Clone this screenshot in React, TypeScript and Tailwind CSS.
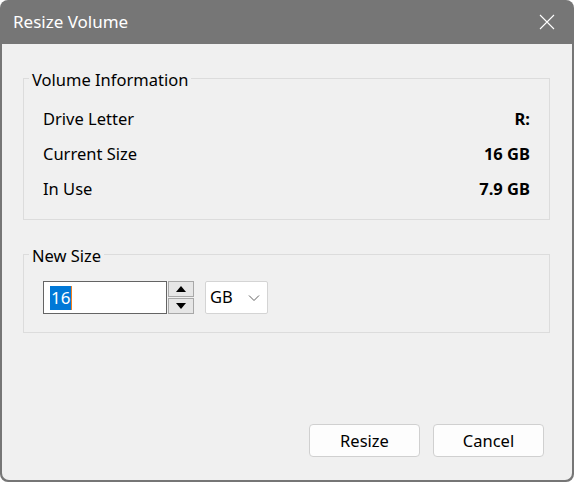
import React from "react";

export default function App() {
  const font = { fontFamily: '"Noto Sans", "Open Sans", sans-serif' };
  return (
    <div className="w-[574px] h-[482px] bg-white" style={font}>
      <div className="w-[574px] h-[482px] rounded-[8px] bg-[#767676] flex flex-col overflow-hidden">
        <div className="h-[44px] flex items-center justify-between pl-[13px] pr-[18px] text-white">
          <span className="text-[17px] leading-[22px]">Resize Volume</span>
          <svg width="16" height="16" viewBox="0 0 16 16" className="mr-[1px]">
            <path d="M1 1 L15 15 M15 1 L1 15" stroke="white" strokeWidth="1.1" fill="none" />
          </svg>
        </div>
        <div className="flex-1 mx-[2px] mb-[2px] bg-[#f0f0f0] rounded-bl-[7px] rounded-br-[7px] flex flex-col px-[21px] pt-[23px] text-[16.5px] text-black">
          <fieldset className="border border-[#dcdcdc] mr-[1px] pt-[13px] pb-[12px]">
            <legend className="ml-[5px] px-[3px] pt-[4px] leading-[18px]">Volume Information</legend>
            <div className="flex flex-col px-[19px]">
              <div className="h-[35px] flex items-center justify-between">
                <span>Drive Letter</span>
                <span className="font-bold">R:</span>
              </div>
              <div className="h-[35px] flex items-center justify-between">
                <span>Current Size</span>
                <span className="font-bold">16 GB</span>
              </div>
              <div className="h-[35px] flex items-center justify-between">
                <span>In Use</span>
                <span className="font-bold">7.9 GB</span>
              </div>
            </div>
          </fieldset>
          <fieldset className="mt-[23px] border border-[#dcdcdc] mr-[1px] pt-[16px] pb-[18px]">
            <legend className="ml-[5px] px-[3px] pt-[4px] leading-[18px]">New Size</legend>
            <div className="flex items-center px-[19px]">
              <div className="w-[124px] h-[33px] border border-[#646464] bg-white flex items-center pl-[6px]">
                <span className="bg-[#0078d7] text-white leading-[24px] px-[1px] text-[17px]">16</span>
                <span className="w-[1px] h-[24px] bg-[#f08020]" />
              </div>
              <div className="w-[27px] h-[33px] flex flex-col gap-[1px] pl-[1px]">
                <div className="flex-1 border border-[#a8a8a8] bg-[#e6e6e6] flex items-center justify-center">
                  <svg width="10" height="6" viewBox="0 0 10 6"><path d="M0 6 L5 0 L10 6 Z" fill="black" /></svg>
                </div>
                <div className="flex-1 border border-[#a8a8a8] bg-[#e6e6e6] flex items-center justify-center">
                  <svg width="10" height="6" viewBox="0 0 10 6"><path d="M0 0 L5 6 L10 0 Z" fill="black" /></svg>
                </div>
              </div>
              <div className="ml-[11px] w-[63px] h-[33px] bg-white border border-[#d4d4d4] rounded-[2px] flex items-center justify-between pl-[4px] pr-[7px]">
                <span>GB</span>
                <svg width="12" height="8" viewBox="0 0 12 8"><path d="M1 1.5 L6 6.5 L11 1.5" stroke="#606060" strokeWidth="1" fill="none" /></svg>
              </div>
            </div>
          </fieldset>
          <div className="flex-1" />
          <div className="flex justify-end gap-[13px] mb-[23px] mr-[7px]">
            <button className="w-[111px] h-[33px] rounded-[4px] bg-[#fdfdfd] border border-[#d0d0d0] text-[16.5px] pt-[1px]">Resize</button>
            <button className="w-[111px] h-[33px] rounded-[4px] bg-[#fdfdfd] border border-[#d0d0d0] text-[16.5px] pt-[1px]">Cancel</button>
          </div>
        </div>
      </div>
    </div>
  );
}
